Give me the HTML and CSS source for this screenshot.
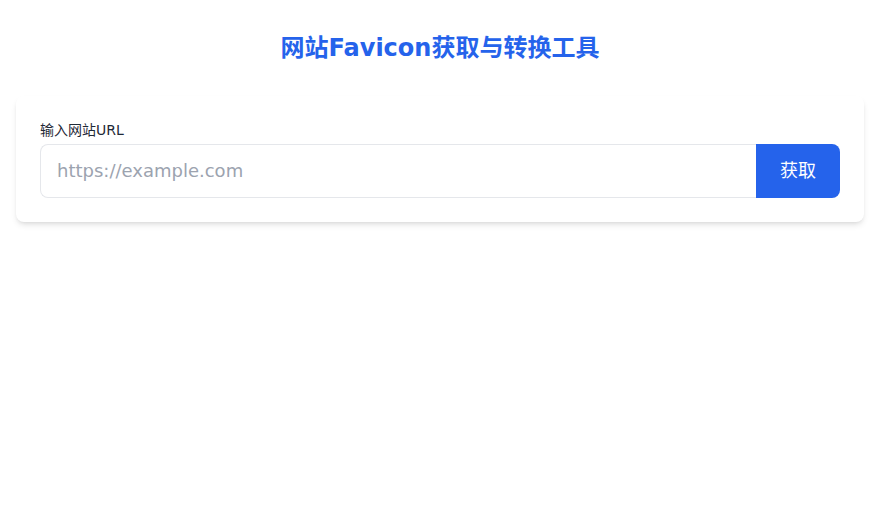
FILE: index.html
```html
<!DOCTYPE html>
<html lang="zh-CN">
<head>
    <meta charset="UTF-8">
    <meta name="viewport" content="width=device-width, initial-scale=1.0">
    <title>网站Favicon获取与转换工具</title>
    <link rel="stylesheet" href="styles.css">
</head>
<body>
    <div class="container">
        <h1 class="title">网站Favicon获取与转换工具</h1>
        <div class="card">
            <label class="label" for="url-input">输入网站URL</label>
            <div class="input-row">
                <input type="text" id="url-input" class="url-input" placeholder="https://example.com">
                <button class="fetch-btn">获取</button>
            </div>
        </div>
    </div>
</body>
</html>
```

FILE: styles.css
```css
body {
    margin: 0;
    font-family: "DejaVu Sans", "Noto Sans CJK SC", sans-serif;
    background: #fff;
    color: #1f2937;
}
.container {
    padding: 16px;
}
.title {
    margin: 16px 0 32px;
    font-size: 24px;
    line-height: 32px;
    font-weight: bold;
    color: #2563eb;
    text-align: center;
}
.card {
    background: #fff;
    border-radius: 8px;
    padding: 24px;
    box-shadow: 0 4px 6px -1px rgba(0, 0, 0, 0.1), 0 2px 4px -2px rgba(0, 0, 0, 0.1);
}
.label {
    display: block;
    font-size: 14px;
    line-height: 20px;
    margin-bottom: 4px;
    color: #1f2937;
}
.input-row {
    display: flex;
}
.url-input {
    flex: 1;
    min-width: 0;
    font-family: inherit;
    font-size: 18px;
    line-height: 28px;
    padding: 12px 16px;
    border: 1px solid #e5e7eb;
    border-right: none;
    border-radius: 8px 0 0 8px;
    outline: none;
    color: #1f2937;
}
.url-input::placeholder {
    color: #9ca3af;
}
.fetch-btn {
    font-family: inherit;
    font-size: 18px;
    line-height: 28px;
    padding: 12px 24px;
    border: none;
    border-radius: 0 8px 8px 0;
    background: #2563eb;
    color: #fff;
    cursor: pointer;
}
```
